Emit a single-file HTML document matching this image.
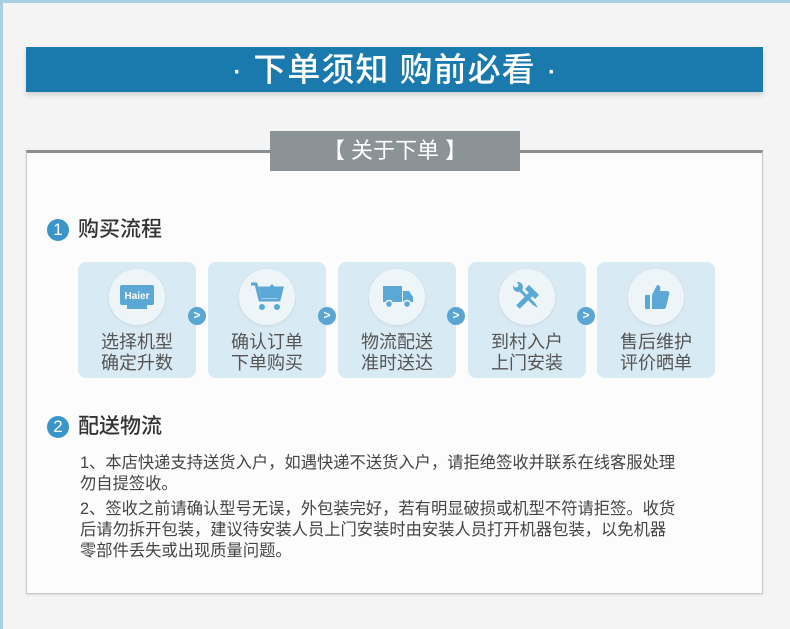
<!DOCTYPE html>
<html><head><meta charset="utf-8">
<style>
*{margin:0;padding:0;box-sizing:border-box}
body{width:790px;height:629px;background:#f4f4f4;position:relative;overflow:hidden;font-family:"Liberation Sans","Noto Sans CJK SC",sans-serif}
.lb{position:absolute;left:0;top:0;width:3px;height:629px;background:#a8cfe2}
.tb{position:absolute;left:0;top:0;width:790px;height:3px;background:#a8cfe2}
.banner{position:absolute;left:26px;top:47px;width:737px;height:45px;background:#1a7aad;box-shadow:0 3px 5px rgba(0,0,0,.15);color:#fff;font-size:33px;font-weight:500;text-align:center;line-height:45px;letter-spacing:1px}
.panel{position:absolute;left:26px;top:150px;width:737px;height:444px;background:#fcfcfc;border:1px solid #c8c8c8;border-top:3px solid #8a8e91;box-shadow:0 1px 2px rgba(0,0,0,.1)}
.tab{position:absolute;left:270px;top:131px;width:250px;height:40px;background:#8c9396;color:#fff;font-size:22px;text-align:center;line-height:40px}
.h{position:absolute;left:47px;font-size:21px;font-weight:500;color:#333;line-height:24px;height:24px}
.h .n{display:inline-block;width:22px;height:22px;border-radius:50%;background:#3a95c9;color:#fff;font-size:17px;font-weight:normal;text-align:center;line-height:22px;vertical-align:top;margin-right:9px;margin-top:1px}
.card{position:absolute;top:262px;width:118px;height:116px;background:#d8eaf4;border-radius:8px}
.ic{position:absolute;left:31px;top:7px;width:56px;height:56px;border-radius:50%;background:#eef5f9;box-shadow:0 1px 3px rgba(0,0,0,.08)}
.ic svg{position:absolute;left:0;top:0}
.t{position:absolute;left:0;top:70px;width:118px;text-align:center;font-size:18px;line-height:21px;color:#555}
.ar{position:absolute;top:307px;width:18px;height:18px;border-radius:50%;background:#59a6d3;color:#fff;font-size:12px;text-align:center;line-height:17px;font-weight:bold}
.p{position:absolute;left:80px;font-size:16.3px;color:#444;line-height:21px;white-space:nowrap}
</style></head><body>
<div class="lb"></div><div class="tb"></div>
<div class="banner">· 下单须知 购前必看 ·</div>
<div class="panel"></div>
<div class="tab">【 关于下单 】</div>
<div class="h" style="top:218px"><span class="n">1</span>购买流程</div>

<div class="card" style="left:78px"><div class="ic"><svg width="56" height="56"><rect x="11" y="16" width="34" height="20" rx="2" fill="#5ba8d6"/><rect x="18" y="35" width="20" height="5" fill="#5ba8d6"/><text x="28" y="30" font-size="10" font-weight="bold" fill="#fff" text-anchor="middle" font-family="Liberation Sans">Haier</text></svg></div><div class="t">选择机型<br>确定升数</div></div>
<div class="ar" style="left:188px">&gt;</div>
<div class="card" style="left:208px"><div class="ic"><svg width="56" height="56"><path d="M12 15h5l4 16h19l3-12H19" fill="none" stroke="#5ba8d6" stroke-width="3"/><path d="M20 20h22l-2 9H22z" fill="#5ba8d6"/><circle cx="23" cy="38" r="3" fill="#5ba8d6"/><circle cx="38" cy="38" r="3" fill="#5ba8d6"/><path d="M29 19l4-4 4 4z" fill="#5ba8d6"/></svg></div><div class="t">确认订单<br>下单购买</div></div>
<div class="ar" style="left:318px">&gt;</div>
<div class="card" style="left:338px"><div class="ic"><svg width="56" height="56"><rect x="14" y="17" width="19" height="16" fill="#5ba8d6"/><path d="M34 22h6l4 6v5H34z" fill="#5ba8d6"/><circle cx="20" cy="35" r="3.5" fill="#5ba8d6" stroke="#eef5f9" stroke-width="1.5"/><circle cx="38" cy="35" r="3.5" fill="#5ba8d6" stroke="#eef5f9" stroke-width="1.5"/></svg></div><div class="t">物流配送<br>准时送达</div></div>
<div class="ar" style="left:447px">&gt;</div>
<div class="card" style="left:468px"><div class="ic"><svg width="56" height="56"><path d="M19 38l16-16" stroke="#5ba8d6" stroke-width="5"/><path d="M30 16l10 10-4 4-10-10z" fill="#5ba8d6"/><path d="M22 20l14 14 3 5-5-3-14-14" fill="#5ba8d6"/><circle cx="19" cy="18" r="5" fill="#5ba8d6"/><circle cx="17" cy="16" r="2.5" fill="#eef5f9"/></svg></div><div class="t">到村入户<br>上门安装</div></div>
<div class="ar" style="left:577px">&gt;</div>
<div class="card" style="left:597px"><div class="ic"><svg width="56" height="56"><rect x="17" y="26" width="5" height="14" fill="#5ba8d6"/><path d="M24 26l5-10c3 0 4 2 3 6h7c2 0 3 2 2 4l-3 12c0 1-1 2-3 2H24z" fill="#5ba8d6"/></svg></div><div class="t">售后维护<br>评价晒单</div></div>

<div class="h" style="top:415px"><span class="n">2</span>配送物流</div>
<div class="p" style="top:453px">1、本店快递支持送货入户，如遇快递不送货入户，请拒绝签收并联系在线客服处理<br>勿自提签收。</div>
<div class="p" style="top:499px">2、签收之前请确认型号无误，外包装完好，若有明显破损或机型不符请拒签。收货<br>后请勿拆开包装，建议待安装人员上门安装时由安装人员打开机器包装，以免机器<br>零部件丢失或出现质量问题。</div>
</body></html>
